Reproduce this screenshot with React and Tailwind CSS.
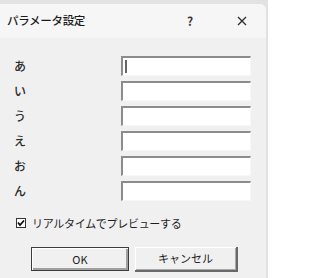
import React from 'react';

const jp = { fontFamily: '"Noto Sans CJK JP", "Noto Sans", sans-serif' };
const labels = ['あ', 'い', 'う', 'え', 'お', 'ん'];

function Field({ caret }) {
  return (
    <div className="relative h-[20px] w-[130px] bg-white border-t-2 border-l-2 border-r border-b border-t-[#8c8c8c] border-l-[#8c8c8c] border-r-[#f7f7f7] border-b-[#f7f7f7]">
      {caret && <div className="absolute left-[2px] top-[2px] h-[13px] w-[2px] bg-[#666]" />}
    </div>
  );
}

export default function App() {
  return (
    <div className="w-[268px] h-[278px] bg-[#e2e2e2] pt-[4px] overflow-hidden" style={jp}>
      <div className="w-[266px] h-[274px] bg-[#f0f0f0] rounded-tr-[6px] flex flex-col">
        {/* title bar */}
        <div className="h-[34px] bg-[#f6f6f6] rounded-tr-[6px] flex items-center pl-[7px] text-[#1c1c1c]">
          <span className="text-[11.5px] tracking-[-0.3px] font-medium">パラメータ設定</span>
          <span className="ml-auto w-[12px] text-center text-[12px] font-semibold text-[#3a3a3a] mr-[41px]">?</span>
          <svg width="10" height="10" viewBox="0 0 10 10" className="mr-[19px]">
            <path d="M1 1L9 9M9 1L1 9" stroke="#2c2c2c" strokeWidth="1.3" />
          </svg>
        </div>

        {/* fields */}
        <div className="mt-[18px] flex flex-col gap-[5px]">
          {labels.map((l, i) => (
            <div key={l} className="flex items-center h-[20px]">
              <span className="w-[121px] pl-[14px] text-[12px] font-medium text-[#2a2a2a] leading-none">{l}</span>
              <Field caret={i === 0} />
            </div>
          ))}
        </div>

        {/* checkbox */}
        <div className="mt-[16px] ml-[16px] flex items-center gap-[6px] h-[12px]">
          <svg width="10" height="10" viewBox="0 0 10 10">
            <rect x="0.5" y="0.5" width="9" height="9" fill="#fff" stroke="#333" />
            <path d="M2 4.5L4 7L8 2.5" fill="none" stroke="#111" strokeWidth="1.8" />
          </svg>
          <span className="text-[11px] tracking-[-0.3px] text-[#1e1e1e] leading-none">リアルタイムでプレビューする</span>
        </div>

        {/* buttons */}
        <div className="mt-[18px] flex">
          <button className="ml-[31px] w-[98px] h-[24px] bg-[#f0f0f0] border border-[#3c3c3c] text-[11px] text-[#1e1e1e] shadow-[inset_1px_1px_0_#fff,inset_-2px_-2px_0_#a0a0a0]">
            OK
          </button>
          <button className="ml-[6px] w-[103px] h-[25px] bg-[#f0f0f0] border-r-2 border-b-2 border-r-[#696969] border-b-[#696969] text-[11px] text-[#1e1e1e] shadow-[inset_1px_1px_0_#fff,inset_-1px_-1px_0_#a8a8a8]">
            キャンセル
          </button>
        </div>
      </div>
    </div>
  );
}
